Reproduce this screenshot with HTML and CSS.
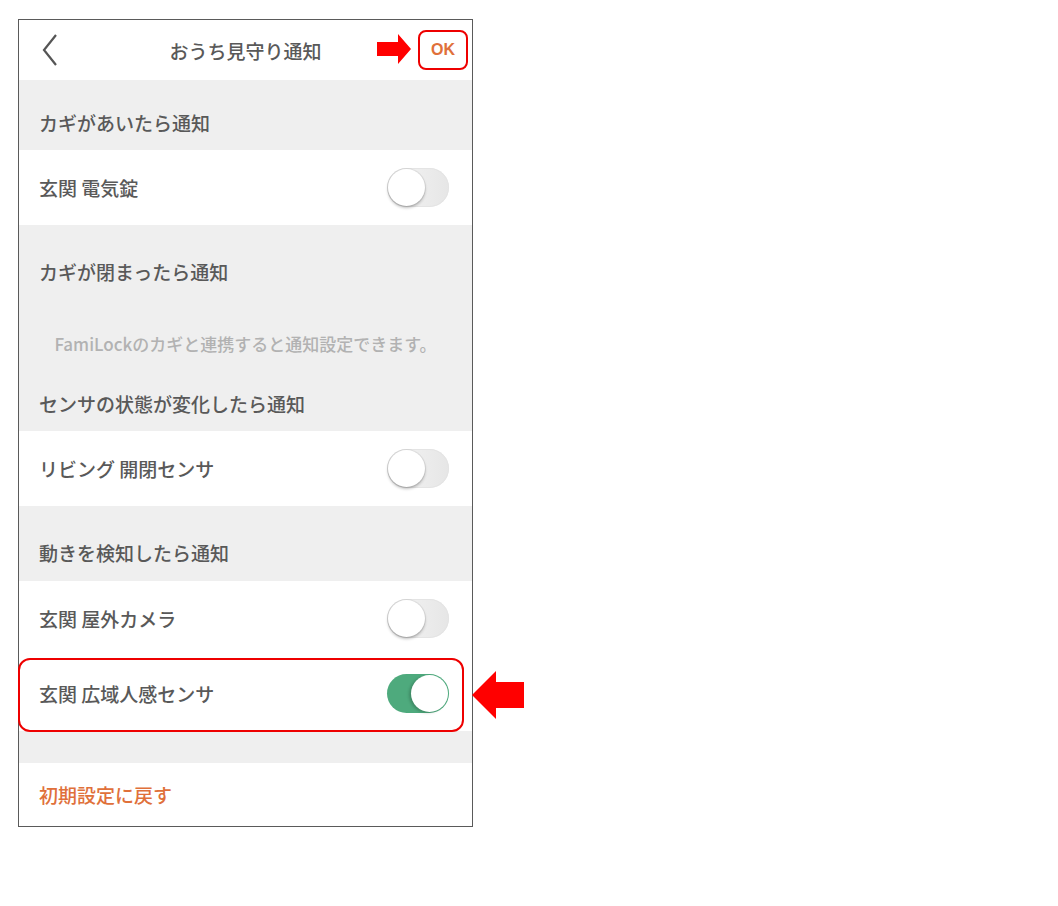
FILE: index.html
```html
<!DOCTYPE html>
<html lang="ja">
<head>
  <meta charset="UTF-8">
  <title>おうち見守り通知</title>
  <link rel="stylesheet" href="styles.css">
</head>
<body>

  <div class="phone">
    <div class="topbar">
      <button class="back" aria-label="戻る">
        <svg width="18" height="32" viewBox="0 0 18 32"><polyline points="15,1 3,16 15,31" fill="none" stroke="#555" stroke-width="2.2"/></svg>
      </button>
      <h1 class="title">おうち見守り通知</h1>
      <div class="ok-wrap">
        <svg class="arrow-right" width="34" height="30" viewBox="0 0 34 30"><polygon points="0,8 21,8 21,0 34,15 21,30 21,22 0,22" fill="#ff0000"/></svg>
        <button class="ok">OK</button>
      </div>
    </div>

    <div class="sec sec-first">カギがあいたら通知</div>
    <div class="row">
      <span>玄関 電気錠</span>
      <span class="toggle"></span>
    </div>

    <div class="sec sec-lock">カギが閉まったら通知</div>
    <div class="note">FamiLockのカギと連携すると通知設定できます。</div>
    <div class="sec sec-sensor">センサの状態が変化したら通知</div>
    <div class="row">
      <span>リビング 開閉センサ</span>
      <span class="toggle"></span>
    </div>

    <div class="sec sec-motion">動きを検知したら通知</div>
    <div class="row">
      <span>玄関 屋外カメラ</span>
      <span class="toggle"></span>
    </div>
    <div class="row marked">
      <span>玄関 広域人感センサ</span>
      <span class="toggle on"></span>
      <div class="highlight"></div>
      <svg class="arrow-left" width="52" height="48" viewBox="0 0 52 48"><polygon points="0,24 24,0 24,11 52,11 52,37 24,37 24,48" fill="#ff0000"/></svg>
    </div>

    <div class="gap"></div>
    <div class="row reset">初期設定に戻す</div>
  </div>

</body>
</html>
```

FILE: styles.css
```css
body { margin: 0; padding: 19px 0 0 18px; background: #fff; font-family: "Noto Sans CJK JP", "Noto Sans", sans-serif; color: #595959; }
.phone { width: 453px; border: 1px solid #5a5a5a; background: #efefef; }

.topbar { height: 60px; background: #fff; display: grid; grid-template-columns: 1fr auto 1fr; align-items: center; }
.back { justify-self: start; margin-left: 22px; padding: 0; border: none; background: none; display: flex; }
.title { margin: 0; font-size: 19px; font-weight: 500; color: #595959; }
.ok-wrap { justify-self: end; display: flex; align-items: center; margin-right: 4px; }
.arrow-right { margin-right: 7px; margin-top: -2px; }
.ok { width: 50px; height: 40px; border: 2px solid #ee0000; border-radius: 8px; background: #fff; color: #e0703a; font-family: "Liberation Sans", Arial, sans-serif; font-weight: bold; font-size: 16px; padding: 0; }

.sec { display: flex; align-items: flex-end; padding-left: 20px; font-size: 19px; font-weight: 500; line-height: 24px; }
.sec-first { height: 55px; padding-bottom: 15px; }
.sec-lock { height: 59px; padding-bottom: 13px; }
.sec-sensor { height: 56px; padding-bottom: 15px; }
.sec-motion { height: 59px; padding-bottom: 16px; }

.note { height: 63px; box-sizing: border-box; padding-top: 37px; line-height: 20px; text-align: center; font-size: 17px; font-weight: 500; color: #b2b2b2; }

.row { height: 75px; background: #fff; display: flex; align-items: center; justify-content: space-between; padding: 0 23px 0 20px; font-size: 19px; font-weight: 500; }
.row.marked { position: relative; }
.row.reset { height: 63px; color: #e0703a; }
.gap { height: 32px; }

.toggle { width: 62px; height: 39px; border-radius: 20px; background: linear-gradient(90deg, #f5f5f5, #e6e6e6); box-shadow: inset 0 0 0 1px #e4e4e4; position: relative; }
.toggle::after { content: ""; position: absolute; left: 1px; top: 1px; width: 37px; height: 37px; border-radius: 50%; background: #fff; box-shadow: 0 2px 3px rgba(0,0,0,0.25), 0 0 0 1px rgba(0,0,0,0.06); }
.toggle.on { background: #4eaa7d; box-shadow: none; }
.toggle.on::after { left: auto; right: 1px; box-shadow: -2px 1px 3px rgba(0,0,0,0.2); }

.highlight { position: absolute; left: -1px; right: 8px; top: 2px; bottom: -1px; border: 2px solid #ee0000; border-radius: 12px; }
.arrow-left { position: absolute; left: 100%; top: 15px; }
```
